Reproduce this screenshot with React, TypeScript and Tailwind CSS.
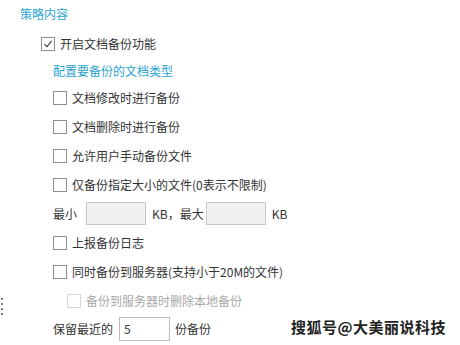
import React from "react";

const font = { fontFamily: '"Microsoft YaHei", "Noto Sans CJK SC", sans-serif' };

const Box = ({ checked, disabled }: { checked?: boolean; disabled?: boolean }) => (
  <span
    className={`flex h-[14px] w-[14px] shrink-0 items-center justify-center border bg-white ${
      disabled ? "border-[#d8d8d8]" : "border-[#8f8f8f]"
    }`}
  >
    {checked && (
      <svg width="10" height="10" viewBox="0 0 10 10">
        <path d="M1.5 5.2 L4 7.6 L8.6 1.8" fill="none" stroke="#444" strokeWidth="1.2" />
      </svg>
    )}
  </span>
);

const Check = ({ label, checked, disabled }: { label: string; checked?: boolean; disabled?: boolean }) => (
  <div className="flex h-[29px] items-center gap-[5px]">
    <Box checked={checked} disabled={disabled} />
    <span className={disabled ? "text-[#a8a8a8]" : "text-[#333]"}>{label}</span>
  </div>
);

export default function App() {
  return (
    <div className="relative h-[345px] w-[460px] overflow-hidden bg-white text-[12px]" style={font}>
      <div className="pl-[20px] pt-[5px]">
        <div className="h-[18px] leading-[18px] text-[#29a3cf]">策略内容</div>
        <div className="pl-[21px] pt-[6px]">
          <Check label="开启文档备份功能" checked />
          <div className="pl-[12px]">
            <div className="flex h-[25px] items-center text-[#29a3cf]">配置要备份的文档类型</div>
            <Check label="文档修改时进行备份" />
            <Check label="文档删除时进行备份" />
            <Check label="允许用户手动备份文件" />
            <Check label="仅备份指定大小的文件(0表示不限制)" />
            <div className="flex h-[29px] items-center text-[#333]">
              <span>最小</span>
              <span className="ml-[9px] h-[23px] w-[60px] border border-[#c8c8c8] bg-[#f0f0f0]" />
              <span className="ml-[6px]">KB，最大</span>
              <span className="ml-[2px] h-[23px] w-[60px] border border-[#c8c8c8] bg-[#f0f0f0]" />
              <span className="ml-[6px]">KB</span>
            </div>
            <Check label="上报备份日志" />
            <Check label="同时备份到服务器(支持小于20M的文件)" />
            <div className="pl-[14px]">
              <Check label="备份到服务器时删除本地备份" disabled />
            </div>
            <div className="flex h-[27px] items-center text-[#333]">
              <span>保留最近的</span>
              <span className="ml-[6px] flex h-[24px] w-[51px] items-center border border-[#bdbdbd] bg-white pl-[4px]">5</span>
              <span className="ml-[5px]">份备份</span>
            </div>
          </div>
        </div>
      </div>
      <div className="absolute left-[1px] top-[298px] flex flex-col gap-[3px]">
        <span className="h-[2px] w-[2px] bg-[#777]" />
        <span className="h-[2px] w-[2px] bg-[#777]" />
        <span className="h-[2px] w-[2px] bg-[#777]" />
        <span className="h-[2px] w-[2px] bg-[#777]" />
      </div>
      <div
        className="absolute left-[291px] top-[316px] text-[15px] font-bold tracking-[0.5px] text-[#222]"
        style={{ textShadow: "0 0 2px #fff, 0 0 2px #fff, 0 0 2px #fff" }}
      >
        搜狐号@大美丽说科技
      </div>
    </div>
  );
}
